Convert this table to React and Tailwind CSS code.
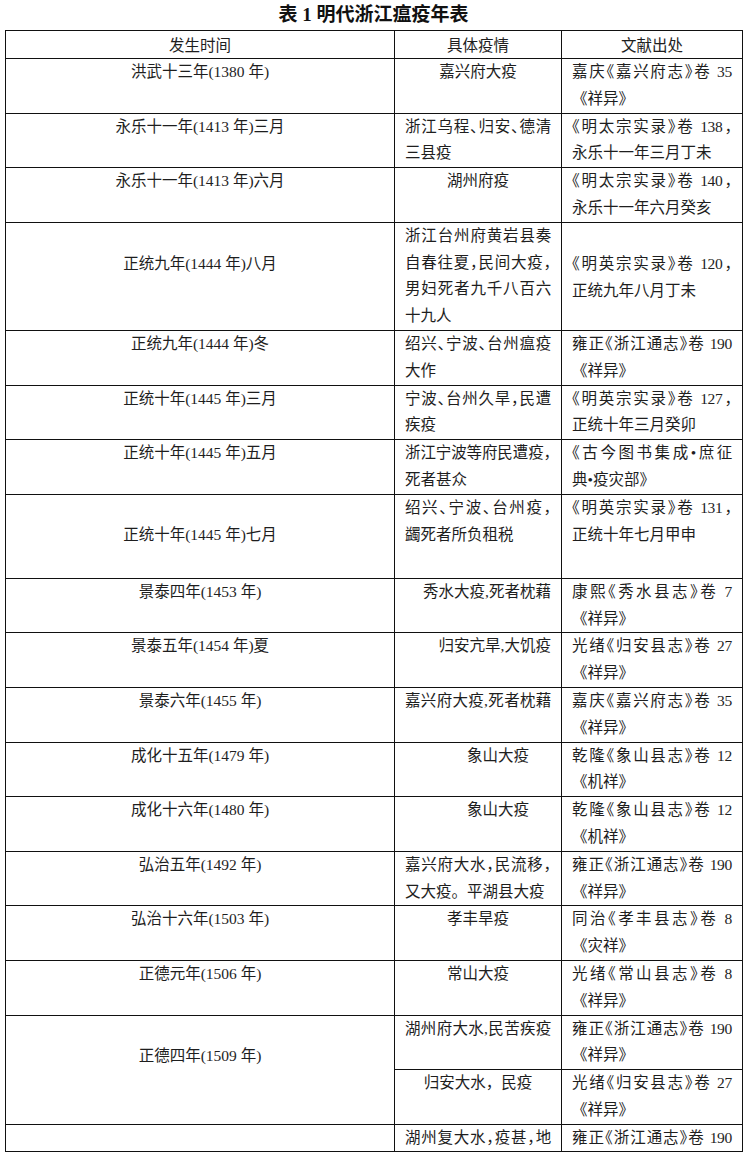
// 表 1 明代浙江瘟疫年表

const FONT = '"Liberation Serif", "Noto Sans CJK SC", serif'

const ROWS = [
  {
    time: '洪武十三年(1380 年)',
    desc: ['嘉兴府大疫'],
    descAlign: 'center',
    src: ['嘉庆《嘉兴府志》卷 35', '《祥异》'],
  },
  {
    time: '永乐十一年(1413 年)三月',
    desc: ['浙江乌程、归安、德清', '三县疫'],
    src: ['《明太宗实录》卷 138，', '永乐十一年三月丁未'],
  },
  {
    time: '永乐十一年(1413 年)六月',
    desc: ['湖州府疫'],
    descAlign: 'center',
    src: ['《明太宗实录》卷 140，', '永乐十一年六月癸亥'],
  },
  {
    time: '正统九年(1444 年)八月',
    timePad: 'pt-[28px]',
    desc: ['浙江台州府黄岩县奏', '自春往夏，民间大疫，', '男妇死者九千八百六', '十九人'],
    src: ['《明英宗实录》卷 120，', '正统九年八月丁未'],
    srcPad: 'pt-[28px]',
  },
  {
    time: '正统九年(1444 年)冬',
    desc: ['绍兴、宁波、台州瘟疫', '大作'],
    src: ['雍正《浙江通志》卷 190', '《祥异》'],
  },
  {
    time: '正统十年(1445 年)三月',
    desc: ['宁波、台州久旱，民遭', '疾疫'],
    src: ['《明英宗实录》卷 127，', '正统十年三月癸卯'],
  },
  {
    time: '正统十年(1445 年)五月',
    desc: ['浙江宁波等府民遭疫，', '死者甚众'],
    src: ['《古今图书集成•庶征', '典•疫灾部》'],
  },
  {
    time: '正统十年(1445 年)七月',
    timePad: 'pt-[27px]',
    tall: true,
    desc: ['绍兴、宁波、台州疫，', '蠲死者所负租税'],
    src: ['《明英宗实录》卷 131，', '正统十年七月甲申'],
  },
  {
    time: '景泰四年(1453 年)',
    desc: ['秀水大疫,死者枕藉'],
    descAlign: 'right',
    src: ['康熙《秀水县志》卷 7', '《祥异》'],
  },
  {
    time: '景泰五年(1454 年)夏',
    desc: ['归安亢旱,大饥疫'],
    descAlign: 'right',
    src: ['光绪《归安县志》卷 27', '《祥异》'],
  },
  {
    time: '景泰六年(1455 年)',
    desc: ['嘉兴府大疫,死者枕藉'],
    descAlign: 'full',
    src: ['嘉庆《嘉兴府志》卷 35', '《祥异》'],
  },
  {
    time: '成化十五年(1479 年)',
    desc: ['象山大疫'],
    descAlign: 'offset',
    src: ['乾隆《象山县志》卷 12', '《机祥》'],
  },
  {
    time: '成化十六年(1480 年)',
    desc: ['象山大疫'],
    descAlign: 'offset',
    src: ['乾隆《象山县志》卷 12', '《机祥》'],
  },
  {
    time: '弘治五年(1492 年)',
    desc: ['嘉兴府大水，民流移，', '又大疫。平湖县大疫'],
    src: ['雍正《浙江通志》卷 190', '《祥异》'],
  },
  {
    time: '弘治十六年(1503 年)',
    desc: ['孝丰旱疫'],
    descAlign: 'center',
    src: ['同治《孝丰县志》卷 8', '《灾祥》'],
  },
  {
    time: '正德元年(1506 年)',
    desc: ['常山大疫'],
    descAlign: 'center',
    src: ['光绪《常山县志》卷 8', '《祥异》'],
  },
  {
    time: '正德四年(1509 年)',
    timePad: 'pt-[27px]',
    timeSpan: 2,
    desc: ['湖州府大水,民苦疾疫'],
    descAlign: 'full',
    src: ['雍正《浙江通志》卷 190', '《祥异》'],
  },
  {
    skipTime: true,
    desc: ['归安大水，民疫'],
    descAlign: 'center',
    src: ['光绪《归安县志》卷 27', '《祥异》'],
  },
  {
    time: '',
    desc: ['湖州复大水，疫甚，地'],
    descAlign: 'full',
    src: ['雍正《浙江通志》卷 190'],
    srcAlign: 'full',
  },
]

// justified lines use half-width punctuation so they fit the narrow columns
const JUSTIFY =
  "text-justify [text-align-last:justify] [font-feature-settings:'halt'] tracking-[-0.3px]"

function Lines({ lines, align }) {
  if (align === 'center') return <div className="text-center">{lines[0]}</div>
  if (align === 'right') return <div className="text-right">{lines[0]}</div>
  if (align === 'offset') return <div className="pl-[62px] text-left">{lines[0]}</div>
  if (align === 'full') return <div className={JUSTIFY}>{lines[0]}</div>

  return lines.map((line, i) => (
    <div key={i} className={i < lines.length - 1 ? JUSTIFY : 'text-left'}>
      {line}
    </div>
  ))
}

export default function App() {
  return (
    <div
      className="w-[747px] min-h-[1161px] bg-white text-[#1e1e1e]"
      style={{ fontFamily: FONT }}
    >
      <h1 className="h-[30px] text-center text-[19px] font-bold leading-[30px] text-[#111]">
        表 1 明代浙江瘟疫年表
      </h1>

      <table
        lang="zh-CN"
        className="ml-[5px] w-[737px] table-fixed border-collapse text-[15.5px] leading-[26.8px]"
      >
        <colgroup>
          <col className="w-[389px]" />
          <col className="w-[167px]" />
          <col className="w-[181px]" />
        </colgroup>
        <thead>
          <tr>
            <th className="h-[28px] border border-[#111] pt-[3px] text-center align-top font-normal leading-[24px]">
              发生时间
            </th>
            <th className="border border-[#111] pt-[3px] text-center align-top font-normal leading-[24px]">
              具体疫情
            </th>
            <th className="border border-[#111] pt-[3px] text-center align-top font-normal leading-[24px]">
              文献出处
            </th>
          </tr>
        </thead>
        <tbody>
          {ROWS.map((row, i) => (
            <tr key={i}>
              {!row.skipTime && (
                <td
                  rowSpan={row.timeSpan || 1}
                  className={`border border-[#111] px-[6px] text-center align-top ${row.timePad || ''}`}
                >
                  {row.time}
                </td>
              )}
              <td
                className={`border border-[#111] px-[10px] align-top ${row.tall ? 'h-[84px]' : ''}`}
              >
                <Lines lines={row.desc} align={row.descAlign} />
              </td>
              <td className={`border border-[#111] px-[10px] align-top ${row.srcPad || ''}`}>
                <Lines lines={row.src} align={row.srcAlign} />
              </td>
            </tr>
          ))}
        </tbody>
      </table>
    </div>
  )
}
